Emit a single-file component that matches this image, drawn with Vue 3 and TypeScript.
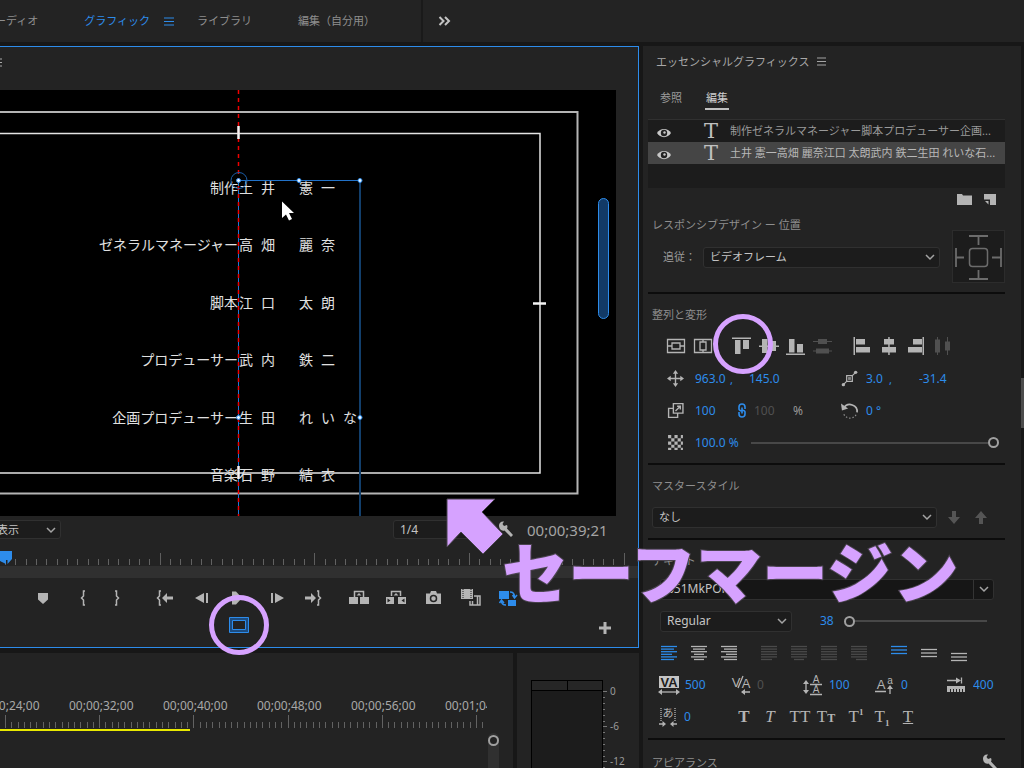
<script setup lang="ts">
import { ref } from 'vue'

interface Credit { role: string; family: string; given: string }
interface Tick { x: number; major: boolean }

const credits: Credit[] = [
  { role: '制作', family: '土井', given: '憲一' },
  { role: 'ゼネラルマネージャー', family: '高畑', given: '麗奈' },
  { role: '脚本', family: '江口', given: '太朗' },
  { role: 'プロデューサー', family: '武内', given: '鉄二' },
  { role: '企画プロデューサー', family: '生田', given: 'れいな' },
  { role: '音楽', family: '石野', given: '結衣' },
]

const layers = [
  { name: '制作ゼネラルマネージャー脚本プロデューサー企画...', selected: false },
  { name: '土井 憲一高畑 麗奈江口 太朗武内 鉄二生田 れいな石...', selected: true },
]

function makeTicks(first: number, span: number, majors: number, extra: number): Tick[] {
  const list: Tick[] = []
  const total = majors * 15 + extra
  for (let i = 0; i < total; i++) {
    list.push({ x: Math.round(first + (i * span) / 15) + 0.5, major: i % 15 === 0 })
  }
  return list
}

const monitorTicks = makeTicks(5, 154.7, 4, 1)
const timelineTicks = makeTicks(5, 94.2, 5, 2)
const timeLabels = ['00;00;24;00', '00;00;32;00', '00;00;40;00', '00;00;48;00', '00;00;56;00', '00;01;04;00']
const dbLabels = ['0', '-6', '-12']

const justify = [
  [[0, 16], [0, 13], [0, 16], [0, 11], [0, 16], [0, 13]],
  [[0, 16], [2, 14], [0, 16], [3, 13], [0, 16], [3, 13]],
  [[0, 16], [3, 16], [0, 16], [5, 16], [0, 16], [3, 16]],
]
const justifyLast = [
  { label: '均等配置（最終行左揃え）', from: 0, to: 11 },
  { label: '均等配置（最終行中央揃え）', from: 3, to: 13 },
  { label: '両端揃え', from: 0, to: 16 },
  { label: '均等配置（最終行右揃え）', from: 5, to: 16 },
]
const justifyNames = ['左揃え', '中央揃え', '右揃え']
const vertical = [
  { label: '上揃え', top: 3 },
  { label: '垂直方向中央', top: 6 },
  { label: '下揃え', top: 10 },
]

const opacity = ref(100)
const fontSize = ref(0)
</script>

<template>
  <div class="app">
    <header class="topbar">
      <nav class="workspaces">
        <a href="#audio" class="ws first">オーディオ</a>
        <a href="#graphics" class="ws active">グラフィック<svg class="menu" width="10" height="9" viewBox="0 0 10 9"><path d="M0 1h10M0 4.5h10M0 8h10" /></svg></a>
        <a href="#library" class="ws">ライブラリ</a>
        <a href="#custom" class="ws">編集（自分用）</a>
      </nav>
      <button class="more" aria-label="その他">
        <svg width="13" height="10" viewBox="0 0 13 10"><path d="M1.5 1l4 4-4 4M7 1l4 4-4 4" fill="none" stroke="#c4c4c4" stroke-width="2" /></svg>
      </button>
    </header>

    <main class="workspace">
      <div class="left">
        <section class="monitor">
          <div class="monitor-head">
            <svg width="2" height="9" viewBox="0 0 2 9"><path d="M0 1h2M0 4.5h2M0 8h2" stroke="#aaa" /></svg>
          </div>
          <div class="stage">
            <div class="credits">
              <p v-for="c in credits" :key="c.role" class="credit">
                <span class="role">{{ c.role }}</span>
                <span class="family"><span v-for="ch in c.family" :key="ch">{{ ch }}</span></span>
                <span class="given"><span v-for="ch in c.given" :key="ch">{{ ch }}</span></span>
              </p>
            </div>
            <svg class="guides" width="616" height="426" viewBox="0 0 616 426">
              <g fill="none">
                <path d="M0 22h577.500V403.500H0" stroke="#b4b4b4" stroke-width="2" />
                <path d="M0 43.500H540V383H0" stroke="#e4e4e4" stroke-width="1.500" />
                <path d="M238.500 90v336" stroke="#1f7ad8" />
                <path d="M238.500 0v426" stroke="#f00000" stroke-dasharray="4 4" stroke-width="1.500" />
                <path d="M238.500 36v13M238.500 376v13M533 213.500h13" stroke="#f4f4f4" stroke-width="2.500" />
                <path d="M238 90.500h122" stroke="#2272c8" stroke-width="1.200" />
                <path d="M360 90v336" stroke="#123f6c" stroke-width="2" />
                <circle cx="239" cy="90.500" r="8" stroke="#1b5ea8" />
              </g>
              <g fill="#e8f4ff" stroke="#2d8ceb">
                <circle cx="238.500" cy="90.500" r="2" /><circle cx="299" cy="90.500" r="2" /><circle cx="360" cy="90.500" r="2" />
                <circle cx="238.500" cy="327.500" r="2" /><circle cx="360" cy="327.500" r="2" />
              </g>
              <path d="M282 111.500v16.500l4-3.500 3 6 3-1.500-3-6h5z" fill="#fff" />
            </svg>
            <div class="vbar"></div>
          </div>

          <div class="status">
            <div class="dd fit">
              <select aria-label="ズームレベル"><option>全体表示</option></select>
              <svg class="caret" viewBox="0 0 10 6"><path d="M1 1l4 4 4-4" /></svg>
            </div>
            <div class="dd res">
              <select aria-label="再生時の解像度"><option>1/4</option></select>
            </div>
            <button class="icon" aria-label="設定">
              <svg width="16" height="16" viewBox="0 0 16 16"><path d="M1 4.500C1 2 3 0 6 .5L4.500 3l1.500 2 3-1c1 2 0 3.500 0 3.500l6 6.500-2 2-6.500-6.500C3.500 10.500 1 8 1 4.500z" fill="#b4b4b4" transform="translate(1 -1)" /></svg>
            </button>
            <time class="tc">00;00;39;21</time>
          </div>

          <div class="ruler">
            <svg width="630" height="17" viewBox="0 0 630 17">
              <line v-for="t in monitorTicks" :key="t.x" :x1="t.x" :x2="t.x" :y1="t.major ? 3 : 9" y2="15" :stroke="t.major ? '#5e5e5e' : '#626262'" />
              <path d="M0 1h12v8l-4.500 5v-4h-1.500v4L0 11z" fill="#2d8ceb" />
            </svg>
          </div>
          <div class="zoombar"></div>

          <div class="transport">
            <div class="tg g1">
              <button class="tb" aria-label="マーカーを追加"><svg viewBox="0 0 28 20"><path d="M9 5h10v6.500L14 16l-5-4.500z" /></svg></button>
            </div>
            <div class="tg g2">
              <button class="tb" aria-label="インをマーク"><svg viewBox="0 0 28 20"><path class="ln" d="M16 3h-1.500v5L12.500 10l2 2v5H16" /></svg></button>
              <button class="tb" aria-label="アウトをマーク"><svg viewBox="0 0 28 20"><path class="ln" d="M12 3h1.500v5l2 2-2 2v5H12" /></svg></button>
            </div>
            <div class="tg g3">
              <button class="tb" aria-label="インへ移動"><svg viewBox="0 0 28 20"><path class="ln" d="M10 3H8.500v5L6.500 10l2 2v5H10" /><path d="M11 10l5-5v3.500h6v3h-6V15z" /></svg></button>
              <button class="tb" aria-label="1 フレーム前へ戻る"><svg viewBox="0 0 28 20"><path d="M7 10l9-5v10zM18 5h2v10h-2z" /></svg></button>
              <button class="tb" aria-label="再生"><svg viewBox="0 0 28 20"><path d="M7 3.500h4l6 6.500-6 6.500H7z" /></svg></button>
              <button class="tb" aria-label="1 フレーム先へ進む"><svg viewBox="0 0 28 20"><path d="M22 10l-9-5v10zM9 5h2v10H9z" /></svg></button>
              <button class="tb" aria-label="アウトへ移動"><svg viewBox="0 0 28 20"><path class="ln" d="M18 3h1.500v5l2 2-2 2v5H18" /><path d="M17 10l-5-5v3.500H6v3h6V15z" /></svg></button>
            </div>
            <div class="tg g4">
              <button class="tb" aria-label="リフト"><svg viewBox="0 0 28 20"><path d="M4 9h9v7H4zM15 9h9v7h-9zM11.500 7.500L14 5l2.500 2.500z" /><path class="ln" d="M9.500 9V3.500h9V9" /></svg></button>
              <button class="tb" aria-label="抽出"><svg viewBox="0 0 28 20"><path fill-rule="evenodd" d="M4 9h8v7H4zM16 9h8v7h-8zM5.500 10.500v4l3-2zM22.500 10.500v4l-3-2zM11.500 7.500L14 5l2.500 2.500z" /><path class="ln" d="M9.500 8V3.500h9V8" /></svg></button>
              <button class="tb" aria-label="フレームを書き出し"><svg viewBox="0 0 28 20"><path d="M7 5.500h4L12 3h5l1 2.500h4V16H7z" /><circle cx="14.500" cy="10.500" r="3" fill="#b4b4b4" stroke="#232323" stroke-width="1.500" /></svg></button>
              <button class="tb" aria-label="比較表示"><svg viewBox="0 0 28 20"><path d="M5 1h12v10H5z" /><path d="M7 1v10M15 1v10" stroke="#232323" stroke-dasharray="1 1" /><path class="ln" d="M18 8h6v9H14v-4M16.500 13v4M21.500 8v9" /></svg></button>
              <button class="tb blue" aria-label="プロキシの切り替え"><svg viewBox="0 0 28 20"><path d="M6 3h10v8H6zM15 12h8v6h-8z" /><path class="ln" d="M17 4c3 0 4.500 1 4.500 5m-2-2l2 3 2.500-3M13 17c-3 0-4.500-1-4.500-4m-2 2l2-3 2.500 3" /></svg></button>
            </div>
          </div>
          <div class="extra">
            <button class="icon" aria-label="セーフマージン">
              <svg width="20" height="16" viewBox="0 0 20 16"><path d="M.5.500h19v15H.5zM3.500 3.500h13v9h-13z" fill="#1c4c80" fill-rule="evenodd" stroke="#2d8ceb" /></svg>
            </button>
            <button class="icon plus" aria-label="ボタンエディター">
              <svg width="12" height="12" viewBox="0 0 12 12"><path d="M6 0v12M0 6h12" stroke="#b4b4b4" stroke-width="3" /></svg>
            </button>
          </div>
        </section>

        <div class="bottom">
          <section class="timeline">
            <div class="labels"><span v-for="l in timeLabels" :key="l">{{ l }}</span></div>
            <svg class="tl-ticks" width="487" height="14" viewBox="0 0 487 14">
              <line v-for="t in timelineTicks" :key="t.x" :x1="t.x" :x2="t.x" :y1="t.major ? 0 : 7" y2="13" stroke="#626262" />
            </svg>
            <div class="render"></div>
            <div class="vscroll"><i class="knob"></i></div>
          </section>
          <section class="meters">
            <div class="meter"><div class="peak"></div><div class="peak"></div></div>
            <div class="scale">
              <div v-for="d in dbLabels" :key="d" class="db">{{ d }}</div>
            </div>
          </section>
        </div>
      </div>

      <aside class="panel">
        <h1>エッセンシャルグラフィックス<svg class="menu" width="9" height="9" viewBox="0 0 9 9"><path d="M0 1h9M0 4.500h9M0 8h9" /></svg></h1>
        <div class="tabs" role="tablist">
          <button role="tab" aria-selected="false">参照</button>
          <button role="tab" aria-selected="true" class="on">編集</button>
        </div>
        <ul class="layers">
          <li v-for="l in layers" :key="l.name" :class="{ sel: l.selected }">
            <button class="icon eye" aria-label="表示の切り替え">
              <svg width="14" height="10" viewBox="0 0 14 10"><path d="M0 5C3-.5 11-.5 14 5c-3 5.500-11 5.500-14 0z" fill="#c8c8c8" /><circle cx="7" cy="5" r="3.200" fill="#222" /><circle cx="7.500" cy="4.500" r="1.200" fill="#c8c8c8" /></svg>
            </button>
            <span class="tee">T</span>
            <span class="lname">{{ l.name }}</span>
          </li>
        </ul>
        <div class="ltools">
          <button class="icon" aria-label="新規グループ"><svg width="15" height="11" viewBox="0 0 15 11"><path d="M0 0h5l1 1.500h9V11H0z" fill="#b4b4b4" /></svg></button>
          <button class="icon" aria-label="新規レイヤー"><svg width="12" height="11" viewBox="0 0 12 11"><path d="M0 0h12v11H6V5.500H0zM1 7h3.500v3.500z" fill="#b4b4b4" /></svg></button>
        </div>

        <section class="responsive">
          <div class="rleft">
            <h2>レスポンシブデザイン ー 位置</h2>
            <div class="follow">
              <label for="follow">追従：</label>
              <div class="dd">
                <select id="follow"><option>ビデオフレーム</option></select>
                <svg class="caret" viewBox="0 0 10 6"><path d="M1 1l4 4 4-4" /></svg>
              </div>
            </div>
          </div>
          <button class="pin" aria-label="ピン留め">
            <svg width="50" height="50" viewBox="0 0 50 50"><g fill="none" stroke="#6c6c6c" stroke-width="2"><rect x="16.500" y="16.500" width="18" height="18" rx="3" stroke-width="1.500" /><path d="M16 4h19M25.500 4v9M16 47h19M25.500 47v-9M3 16v19M3 25.500h8M48 16v19M48 25.500h-9" stroke-width="1.800" /></g></svg>
          </button>
        </section>

        <section class="sec">
          <h2>整列と変形</h2>
          <div class="row align">
            <button class="ab" aria-label="垂直方向中央"><svg viewBox="0 0 20 20"><path class="o" d="M1.500 3.500h17v13h-17zM1.500 10H6M14 10h4.500M6 7h8v6H6z" /></svg></button>
            <button class="ab" aria-label="水平方向中央"><svg viewBox="0 0 20 20"><path class="o" d="M1.500 3.500h17v13h-17zM10 3.500V6M10 14v2.500M7 6h6v8H7z" /></svg></button>
            <button class="ab gap" aria-label="上揃え"><svg viewBox="0 0 20 20"><path d="M0 1.500h19v1.500H0zM3 4h5.500v14H3zM11 4h6v9h-6z" /></svg></button>
            <button class="ab" aria-label="中央揃え"><svg viewBox="0 0 20 20"><path d="M0 9.500h20V11H0zM3 3h5.500v14H3zM11 5h6v10h-6z" /></svg></button>
            <button class="ab" aria-label="下揃え"><svg viewBox="0 0 20 20"><path d="M0 17.500h19V19H0zM3 3h5.500v13.500H3zM11 8h6v8.500h-6z" /></svg></button>
            <button class="ab off" aria-label="垂直方向に分布" disabled><svg viewBox="0 0 20 20"><path d="M0 5h19v1H0zM5 3h9v5H5zM0 14.500h19v1H0zM3 12.500h13v5H3z" /></svg></button>
            <button class="ab gap" aria-label="左揃え"><svg viewBox="0 0 20 20"><path d="M1.500 1H3v18H1.500zM4 3h9v5.500H4zM4 11h14v5.500H4z" /></svg></button>
            <button class="ab" aria-label="中央揃え（水平）"><svg viewBox="0 0 20 20"><path d="M9.200 1h1.500v18H9.200zM5 3h10v5.500H5zM3 11h14v5.500H3z" /></svg></button>
            <button class="ab" aria-label="右揃え"><svg viewBox="0 0 20 20"><path d="M16.500 1H18v18h-1.500zM7 3h9v5.500H7zM2 11h14v5.500H2z" /></svg></button>
            <button class="ab off" aria-label="水平方向に分布" disabled><svg viewBox="0 0 20 20"><path d="M4 1h1v18H4zM2 3.500h5v13H2zM14 1h1v18h-1zM12 5.500h5v9h-5z" /></svg></button>
          </div>
          <div class="row xf">
            <svg class="glyph" viewBox="0 0 16 16"><path class="o" d="M8 2v12M2 8h12" /><path d="M8 0l2.500 3.500h-5zM8 16l2.500-3.500h-5zM0 8l3.500-2.500v5zM16 8l-3.500-2.500v5z" /></svg>
            <span class="v"><input class="num w30" value="963.0" aria-label="位置 X" /><b>,</b></span>
            <span class="v"><input class="num w30" value="145.0" aria-label="位置 Y" /></span>
            <svg class="glyph" viewBox="0 0 18 18"><path class="o" d="M3 15l3-3M12 6l3-3M6 6h6v6H6z" /><rect x="7.500" y="7.500" width="3" height="3" fill="#888" /><circle cx="2.500" cy="15.500" r="1.800" /><circle cx="15.500" cy="2.500" r="1.800" /></svg>
            <span class="v"><input class="num w18" value="3.0" aria-label="アンカー X" /><b>,</b></span>
            <span class="v"><input class="num w30" value="-31.4" aria-label="アンカー Y" /></span>
          </div>
          <div class="row xf">
            <svg class="glyph" viewBox="0 0 16 16"><path class="o" d="M6 1.500h9v9H6zM6 6H1.500v8.500H10V10.500M8 8.500L12.500 4M9.500 4h3v3" /></svg>
            <span class="v link"><input class="num w30" value="100" aria-label="スケール" /><svg width="8" height="15" viewBox="0 0 8 15"><path d="M1 6V4C1 0 7 0 7 4v2M1 9v2c0 4 6 4 6 0V9M1 6c0 1.500 3 2 3 2M7 9c0-1.500-3-2-3-2M4 4.500v6" fill="none" stroke="#2d8ceb" stroke-width="1.600" /></svg></span>
            <span class="v dimcell"><input class="num w30 dim" value="100" aria-label="スケール（幅）" disabled /><i class="pct">%</i></span>
            <svg class="glyph" viewBox="0 0 18 18"><path d="M3 6.500C7-.5 18 3 17 11" fill="none" stroke="#b4b4b4" stroke-width="1.800" /><path d="M0 1.500l1 7.500 6.500-2z" /><path d="M3 13c3 6 12 5 13.500-1" fill="none" stroke="#8a8a8a" stroke-width="1.300" stroke-dasharray="1.500 2" /></svg>
            <span class="v"><input class="num w18" value="0 °" aria-label="回転" /></span>
          </div>
          <div class="row xf op">
            <svg class="glyph" viewBox="0 0 16 16"><path d="M1 1h3v3H1zM7 1h3v3H7zM13 1h2v3h-2zM4 4h3v3H4zM10 4h3v3h-3zM1 7h3v3H1zM7 7h3v3H7zM13 7h2v3h-2zM4 10h3v3H4zM10 10h3v3h-3zM1 13h3v2H1zM7 13h3v2H7zM13 13h2v2h-2z" /></svg>
            <input class="num" value="100.0 %" aria-label="不透明度の値" />
            <input v-model="opacity" type="range" min="0" max="100" aria-label="不透明度" />
          </div>
        </section>

        <section class="sec">
          <h2>マスタースタイル</h2>
          <div class="row master">
            <div class="dd">
              <select aria-label="マスタースタイル"><option>なし</option></select>
              <svg class="caret" viewBox="0 0 10 6"><path d="M1 1l4 4 4-4" /></svg>
            </div>
            <button class="icon" aria-label="下へ" disabled><svg width="12" height="13" viewBox="0 0 12 13"><path d="M4 0h4v6h4l-6 7-6-7h4z" fill="#555" /></svg></button>
            <button class="icon" aria-label="上へ" disabled><svg width="12" height="13" viewBox="0 0 12 13"><path d="M4 13h4V7h4L6 0 0 7h4z" fill="#555" /></svg></button>
          </div>
        </section>

        <section class="sec text">
          <h2>テキスト</h2>
          <div class="row font">
            <div class="dd split">
              <select aria-label="フォント"><option>851MkPOP</option></select>
              <svg class="caret" viewBox="0 0 10 6"><path d="M1 1l4 4 4-4" /></svg>
            </div>
          </div>
          <div class="row style">
            <div class="dd">
              <select aria-label="フォントスタイル"><option>Regular</option></select>
              <svg class="caret" viewBox="0 0 10 6"><path d="M1 1l4 4 4-4" /></svg>
            </div>
            <input class="num w18" value="38" aria-label="フォントサイズの値" />
            <input v-model="fontSize" type="range" min="0" max="100" aria-label="フォントサイズ" />
          </div>
          <div class="row just">
            <button v-for="(j, i) in justify" :key="i" class="jb" :class="{ on: i === 0 }" :aria-label="justifyNames[i]">
              <svg viewBox="0 0 16 16"><path v-for="(s, k) in j" :key="k" :d="`M${s[0]} ${k * 2.6 + 1.5}H${s[1]}`" /></svg>
            </button>
            <button v-for="(j, i) in justifyLast" :key="j.label" class="jb off" :class="{ lead: i === 0 }" :aria-label="j.label" disabled>
              <svg viewBox="0 0 16 16"><path v-for="k in 5" :key="k" :d="`M0 ${k * 2.6 - 1.1}H16`" /><path :d="`M${j.from} 14.500H${j.to}`" /></svg>
            </button>
            <button v-for="(j, i) in vertical" :key="j.label" class="jb" :class="{ on: i === 0, lead: i === 0 }" :aria-label="j.label">
              <svg viewBox="0 0 16 20"><path v-for="k in 3" :key="k" :d="`M0 ${j.top + (k - 1) * 3.5 + 0.5}H16`" /></svg>
            </button>
          </div>
          <div class="row spacing">
            <span class="cell"><svg viewBox="0 0 22 20"><rect x="1" y="1" width="20" height="12" fill="#c4c4c4" /><text x="11" y="12" class="sans dark">VA</text><path class="o" d="M3 17h16" /><path d="M0 17l4-3v6zM22 17l-4-3v6z" /></svg><input class="num w30" value="500" aria-label="トラッキング" /></span>
            <span class="cell"><svg viewBox="0 0 22 20"><text x="6" y="12" class="sans">V</text><text x="16" y="13" class="sans">A</text><path class="o" d="M8 13L13 1M12 17h8" /><path d="M11 17l4-3v6z" /></svg><input class="num w18 dim" value="0" aria-label="カーニング" disabled /></span>
            <span class="cell"><svg viewBox="0 0 22 20"><text x="14" y="8" class="sans sm">A</text><text x="14" y="18" class="sans sm">A</text><path class="o" d="M8 9.500h12M8 19.500h12M4 8v8" /><path d="M4 5l3 4H1zM4 19l3-4H1z" /></svg><input class="num w30" value="100" aria-label="行間" /></span>
            <span class="cell"><svg viewBox="0 0 22 20"><text x="7" y="14" class="sans">A</text><text x="16" y="9" class="sans sm">a</text><path class="o" d="M1 16.500h11M16 13v6" /><path d="M16 10l3 4h-6z" /></svg><input class="num w18" value="0" aria-label="ベースラインシフト" /></span>
            <span class="cell"><svg viewBox="0 0 22 20"><path class="o" d="M1 5.500h12M15.500 2.500v6" /><path d="M15 5.500l-5-3v6zM1 11h18v6h-2v-3h-1v3h-2v-3h-1v3h-2v-3h-1v3H8v-3H7v3H5v-3H4v3H1z" /></svg><input class="num w30" value="400" aria-label="タブの幅" /></span>
          </div>
          <div class="row tsume">
            <span class="cell"><svg viewBox="0 0 22 20"><text x="11" y="10" class="jp">あ</text><path class="o" d="M4 1v13M18 1v13" stroke-dasharray="1 1" /><path class="o" d="M2 17h4M16 17h4" /><path d="M9 17l-3.500-3v6zM13 17l3.500-3v6z" /></svg><input class="num w18" value="0" aria-label="文字ツメ" /></span>
            <button class="tt bold" aria-label="太字">T</button>
            <button class="tt ital" aria-label="斜体">T</button>
            <button class="tt lead" aria-label="オールキャップス">TT</button>
            <button class="tt" aria-label="スモールキャップス">T<small>T</small></button>
            <button class="tt lead" aria-label="上付き文字">T<sup>1</sup></button>
            <button class="tt" aria-label="下付き文字">T<sub>1</sub></button>
            <button class="tt" aria-label="下線"><u>T</u></button>
          </div>
        </section>

        <section class="sec last">
          <h2>アピアランス</h2>
          <button class="icon" aria-label="アピアランス設定">
            <svg width="16" height="16" viewBox="0 0 16 16"><path d="M1 4.500C1 2 3 0 6 .5L4.500 3l1.500 2 3-1c1 2 0 3.500 0 3.500l6 6.500-2 2-6.500-6.500C3.500 10.500 1 8 1 4.500z" fill="#b4b4b4" /></svg>
          </button>
        </section>
      </aside>
      <div class="page-scroll"></div>
    </main>

    <div class="notes">
      <svg width="800" height="680" viewBox="0 0 800 680">
        <g fill="none" stroke="#d6a2ff" stroke-width="5"><circle cx="239" cy="625" r="27.500" /><circle cx="743" cy="344" r="27.500" /></g>
        <path d="M447 499h48l-13 13 21 22-20 20-22-22-14 15z" fill="#d6a2ff" stroke="#4b4450" />
      </svg>
      <strong class="callout">セーフマージン</strong>
    </div>
  </div>
</template>

<style>
html, body { background: #171717; }
</style>

<style scoped>
.app { position: relative; display: flex; flex-direction: column; height: 100vh; min-height: 768px; overflow: hidden; background: #171717; color: #9a9a9a; font: 11px/16px "Noto Sans", "Noto Sans CJK JP", sans-serif; }
.app *, .app *::before { box-sizing: border-box; }
button { padding: 0; border: 0; background: none; color: inherit; font: inherit; }
h1, h2, p, ul { margin: 0; padding: 0; font: inherit; font-weight: 400; }
svg { display: block; overflow: visible; }
.icon { display: block; flex: none; }

.topbar { display: flex; flex: none; height: 42px; margin-bottom: 4px; background: #232323; }
.workspaces { display: flex; align-items: center; border-right: 2px solid #1a1a1a; }
.ws { display: flex; align-items: center; padding-right: 46px; color: #8e8e8e; text-decoration: none; white-space: nowrap; }
.ws.first { margin-left: -16px; }
.ws.active { padding-right: 23px; color: #2d8ceb; }
.menu { stroke: #a4a4a4; stroke-width: 1; margin-left: 8px; }
.ws .menu { stroke: #2d8ceb; margin-left: 14px; }
.more { width: 42px; display: flex; align-items: center; justify-content: center; }

.workspace { flex: 1; min-height: 0; display: flex; }
.left { flex: 1; min-width: 0; display: flex; flex-direction: column; margin-right: 4px; }
.monitor { flex: 1; min-height: 0; display: flex; flex-direction: column; background: #232323; border: 1px solid #2d8ceb; border-left: 0; }
.monitor-head { height: 43px; padding-top: 11px; }
.stage { position: relative; flex: 1; min-height: 0; overflow: hidden; margin-right: 22px; background: #000; }
.credits { position: absolute; left: 0; top: 69px; width: 100%; height: 345px; display: grid; grid-auto-rows: 1fr; }
.credit { display: grid; grid-template-columns: 238px 60px 1fr; align-items: center; color: #e0e0e0; font-size: 14px; line-height: 20px; }
.role { text-align: right; }
.family, .given { display: flex; gap: 8px; padding-left: 1px; }
.guides { position: absolute; left: 0; top: 0; }
.vbar { position: absolute; right: 7px; top: 108px; width: 11px; height: 121px; border: 1px solid #2d8ceb; border-radius: 6px; background: #123a66; }

.status { display: flex; align-items: center; height: 27px; padding-right: 30px; }
.dd { display: grid; align-items: center; }
.dd select { grid-area: 1 / 1; width: 100%; height: 21px; margin: 0; padding: 0 20px 0 6px; border: 1px solid #303030; border-radius: 3px; background: #1c1c1c; color: #c4c4c4; font: inherit; appearance: none; }
.dd .caret { grid-area: 1 / 1; justify-self: end; width: 10px; height: 6px; margin-right: 5px; fill: none; stroke: #a4a4a4; stroke-width: 1.5; pointer-events: none; }
.fit { width: 87px; margin-left: -26px; }
.status .dd select { height: 19px; }
.fit select { padding-left: 0; }
.res { width: 90px; margin-left: auto; font-size: 12px; }
.status .icon { margin-left: 14px; }
.tc { width: 81px; margin-left: 14px; color: #a4a4a4; font-size: 15px; line-height: 20px; white-space: nowrap; }
.ruler { height: 23px; padding-top: 7px; }
.zoombar { flex: none; height: 12px; background: #303030; }
.ruler, .status, .monitor-head { flex: none; }

.transport { display: flex; flex: none; height: 39px; align-items: center; padding-left: 29px; }
.tg { display: flex; gap: 9px; }
.g2 { gap: 6px; margin-left: 12px; }
.g3 { margin-left: 20px; }
.g4 { margin-left: 18px; }
.tb { width: 28px; height: 20px; }
.tb svg { width: 28px; height: 20px; fill: #b4b4b4; }
.ln { fill: none; stroke: #b4b4b4; stroke-width: 1.5; }
.blue svg { fill: #2d8ceb; }
.blue .ln { stroke: #2d8ceb; }
.extra { display: flex; flex: none; align-items: flex-start; height: 30px; padding: 0 27px 0 229px; justify-content: space-between; }
.plus { padding-top: 5px; }

.bottom { display: flex; flex: none; height: 115px; margin-top: 5px; }
.timeline { position: relative; flex: 1; min-width: 0; overflow: hidden; background: #232323; margin-right: 4px; }
.labels { display: flex; width: 487px; height: 62px; padding-top: 44px; overflow: hidden; font-size: 12px; line-height: 18px; color: #a8a8a8; }
.labels span { flex: none; width: 94px; white-space: nowrap; }
.labels span:first-child { margin-left: -25px; }
.render { width: 190px; height: 2px; background: #e8e800; }
.vscroll { position: absolute; right: 14px; top: 80px; bottom: 0; width: 11px; border-radius: 6px 6px 0 0; background: #303030; }
.knob { display: block; width: 11px; height: 11px; margin-top: 2px; border: 2px solid #a0a0a0; border-radius: 50%; background: #232323; }
.meters { display: flex; width: 122px; padding: 27px 0 0 14px; background: #232323; }
.meter { display: grid; grid-template-columns: 1fr 1fr; align-content: start; width: 72px; border: 1px solid #000; border-bottom: 0; background: #1c1c1c; }
.peak { height: 10px; border-bottom: 1px solid #000; background: #262626; }
.peak + .peak { border-left: 1px solid #000; }
.scale { flex: 1; overflow: hidden; padding-top: 11px; font-size: 10px; line-height: 12px; }
.db { height: 35px; padding-left: 7px; background: linear-gradient(#777, #777) 0 0 / 4px 1px no-repeat, repeating-linear-gradient(#777 0 1px, transparent 1px 6px) 0 0 / 2px 100% no-repeat; line-height: 0; }

.panel { flex: 0 0 378px; min-width: 0; overflow: hidden; padding: 0 16px 0 5px; background: #232323; }
.panel h1 { display: flex; align-items: center; height: 31px; padding-left: 8px; color: #a8a8a8; }
.tabs { display: flex; gap: 22px; height: 42px; padding: 13px 0 0 11px; }
.tabs button { height: 20px; padding: 0 1px 2px; border-bottom: 2px solid transparent; }
.tabs .on { color: #d0d0d0; border-color: #c0c0c0; }
.layers { height: 69px; border-top: 1px solid #303030; background: #1c1c1c; list-style: none; }
.layers li { display: flex; align-items: center; height: 22px; overflow: hidden; white-space: nowrap; }
.layers .sel { background: #454545; color: #b8b8b8; }
.eye { margin: 3px 0 0 9px; }
.tee { width: 50px; padding-left: 33px; color: #c0c0c0; font: 21px/22px "DejaVu Serif", serif; }
.lname { margin-left: 9px; }
.ltools { display: flex; align-items: center; justify-content: flex-end; gap: 12px; height: 22px; padding-right: 9px; }
.sec h2, .responsive h2 { padding-left: 4px; color: #8e8e8e; }
.responsive { display: flex; justify-content: space-between; height: 82px; }
.rleft { flex: 1; }
.responsive h2 { height: 30px; line-height: 30px; }
.follow { display: flex; align-items: center; height: 34px; padding-left: 15px; }
.follow .dd { flex: 1; margin: 0 12px 0 7px; }
.pin { width: 53px; height: 53px; margin-top: 20px; border: 1px solid #2c2c2c; background: #1c1c1c; }
.sec { padding-bottom: 5px; border-top: 2px solid #0c0c0c; }
.sec h2 { height: 36px; padding-top: 6px; line-height: 30px; }
.row { display: flex; align-items: center; height: 32px; }
.align { padding-left: 15px; }
.ab { width: 27px; height: 20px; padding: 0 3px; }
.ab.gap { margin-left: 12px; }
.ab svg { width: 20px; height: 20px; fill: #b4b4b4; }
.ab.off svg { fill: #505050; }
.o { fill: none; stroke: #b4b4b4; stroke-width: 1.3; }
.xf { display: grid; grid-template-columns: 28px 54px 92px 25px 53px 1fr; padding: 1px 0 0 19px; }
.glyph { width: 17px; height: 17px; fill: #b4b4b4; }
.v { display: flex; align-items: center; }
.v b { color: #2d8ceb; font-weight: 400; padding: 3px 0 0 3px; }
.num { min-width: 0; height: 18px; padding: 0; border: 0; background: none; color: #2d8ceb; font-family: inherit; font-size: 12px; line-height: 18px; }
.w30 { width: 32px; }
.w18 { width: 20px; }
.dim { color: #505050; }
.link { justify-content: space-between; padding-right: 3px; }
.dimcell { padding-left: 5px; gap: 7px; }
.pct { font-style: normal; font-size: 12px; }
.op { grid-template-columns: 28px 50px 1fr; }
.op input[type="range"] { margin-right: 6px; }
input[type="range"] { height: 12px; min-width: 0; margin: 0; background: linear-gradient(#484848, #484848) 6px 5px / 100% 2px no-repeat; appearance: none; }
input[type="range"]::-webkit-slider-thumb { width: 11px; height: 11px; border: 2px solid #a0a0a0; border-radius: 50%; background: #232323; appearance: none; }
.master { padding-left: 4px; gap: 15px; }
.master .dd { flex: 0 1 285px; margin-right: -4px; }
.text h2 { height: 33px; padding-top: 8px; line-height: 26px; }
.font { padding: 0 11px 0 12px; font-size: 12px; }
.font .dd { flex: 1; }
.split select { background: linear-gradient(#343434, #343434) right 19px top 0 / 1px 100% no-repeat #161616; }
.style { padding: 0 18px 0 12px; font-size: 12px; }
.style .dd { width: 132px; margin-right: 28px; }
.style input[type="range"] { flex: 1; margin-left: 4px; }
.just { padding-left: 6px; }
.jb { width: 30px; height: 20px; padding: 0 7px; }
.jb.lead { margin-left: 10px; }
.jb svg { width: 16px; height: 16px; stroke: #b4b4b4; stroke-width: 1.3; }
.jb svg[viewBox="0 0 16 20"] { height: 20px; }
.jb.on svg { stroke: #2d8ceb; }
.jb.off svg { stroke: #4a4a4a; }
.cell { display: flex; align-items: center; gap: 5px; }
.cell svg { width: 22px; height: 20px; fill: #b4b4b4; }
.spacing { display: grid; grid-template-columns: repeat(4, 72px) 1fr; padding-left: 10px; }
.sans { font: 13px "Liberation Sans", sans-serif; text-anchor: middle; }
.sans.sm { font-size: 10px; }
.sans.dark { fill: #1c1c1c; font-weight: 700; }
.jp { font: 11px "Noto Sans CJK JP", sans-serif; text-anchor: middle; }
.tsume { padding-left: 9px; }
.tsume .cell { width: 74px; }
.tt { width: 26px; color: #b4b4b4; font: 17px/20px "Liberation Serif", "Times New Roman", serif; white-space: nowrap; }
.tt.lead { margin-left: 4px; }
.tt.bold { font-weight: 700; }
.tt.ital { font-style: italic; }
.tt small { font-size: 12px; font-weight: 700; }
.tt sup, .tt sub { font-size: 9px; font-weight: 700; line-height: 0; }
.last { display: flex; justify-content: space-between; padding: 0; }
.last h2 { padding-top: 8px; }
.last .icon { height: 30px; padding: 14px 7px 0 0; }
.page-scroll { flex: 0 0 3px; height: 50px; margin-top: 332px; background: #4c4c4c; }

.notes { position: absolute; inset: 0; pointer-events: none; }
.callout { position: absolute; left: 502px; top: 521px; color: #d6a2ff; font: 900 66px/96px "Noto Sans CJK JP", sans-serif; white-space: nowrap; paint-order: stroke; -webkit-text-stroke: 2px #4b4450; }
</style>
